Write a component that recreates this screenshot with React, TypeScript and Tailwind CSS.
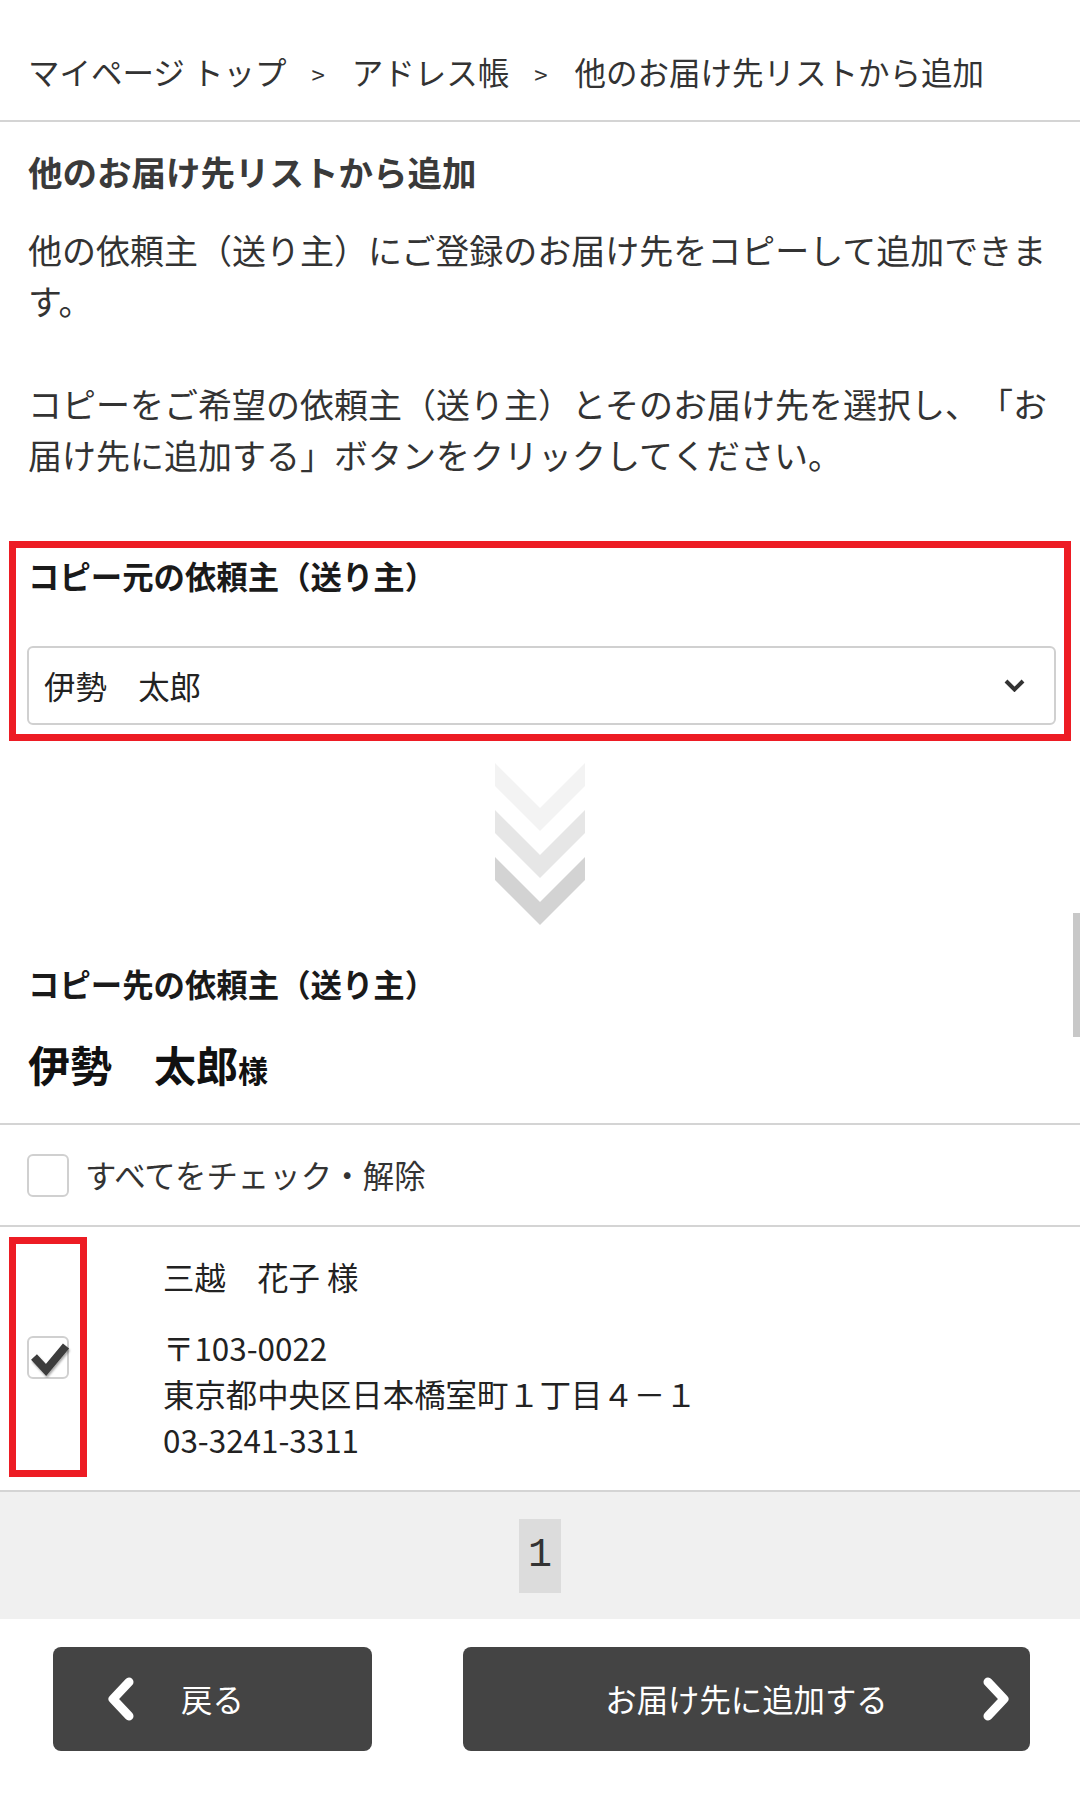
import React from 'react';

const Checkbox = ({ checked }: { checked?: boolean }) => (
  <div className="relative w-[42px] h-[43px] shrink-0 rounded-[6px] border-2 border-[#d0d0d0] bg-white">
    {checked && (
      <svg className="absolute left-[-2px] top-[-2px] overflow-visible" width="42" height="43" viewBox="0 0 42 43">
        <defs>
          <filter id="chk" x="-30%" y="-30%" width="160%" height="160%">
            <feDropShadow dx="1" dy="2" stdDeviation="1.2" floodColor="#000" floodOpacity="0.35" />
          </filter>
        </defs>
        <polyline points="7,21 19,34 39,10" fill="none" stroke="#3c3c3c" strokeWidth="8" filter="url(#chk)" />
      </svg>
    )}
  </div>
);

const Chevron = ({ dir }: { dir: 'left' | 'right' }) => (
  <svg width="28" height="44" viewBox="0 0 28 44">
    <polyline
      points={dir === 'left' ? '22,5 6,22 22,39' : '6,5 22,22 6,39'}
      fill="none"
      stroke="#fff"
      strokeWidth="9"
      strokeLinecap="round"
      strokeLinejoin="round"
    />
  </svg>
);

const DownArrows = () => (
  <svg width="90" height="162" viewBox="0 0 90 162">
    {['#f3f3f3', '#e6e6e6', '#d3d3d3'].map((c, i) => {
      const y = i * 47;
      return (
        <polygon
          key={i}
          points={`0,${y} 45,${y + 45} 90,${y} 90,${y + 23} 45,${y + 68} 0,${y + 23}`}
          fill={c}
        />
      );
    })}
  </svg>
);

const Sep = () => (
  <span className="inline-block text-[24px] leading-none ml-[25px] mr-[27px] align-middle -translate-y-[2px]">&gt;</span>
);

export default function App() {
  return (
    <div className="relative w-[1080px] bg-white text-[#333] font-['Noto_Sans_CJK_JP',sans-serif] [text-spacing-trim:space-all]">
      {/* breadcrumb */}
      <nav className="h-[122px] pt-[48px] px-[28px] text-[31.5px] leading-[46px] border-b-2 border-[#d4d4d4] whitespace-nowrap">
        <span>マイページ トップ</span>
        <Sep />
        <span>アドレス帳</span>
        <Sep />
        <span>他のお届け先リストから追加</span>
      </nav>

      <section className="px-[28px]">
        <h1 className="mt-[24px] text-[34.5px] leading-[50px] font-bold text-[#3a3a3a]">他のお届け先リストから追加</h1>
        <p className="mt-[28px] text-[34px] leading-[51px]">
          他の依頼主（送り主）にご登録のお届け先をコピーして追加できます。
        </p>
        <p className="mt-[52px] text-[34px] leading-[51px]">
          コピーをご希望の依頼主（送り主）とそのお届け先を選択し、「お届け先に追加する」ボタンをクリックしてください。
        </p>
      </section>

      {/* copy source */}
      <section className="mx-[9px] mt-[61px] border-[7px] border-[#ed1c24] pt-[5px] pb-[9px] pl-[11px] pr-[8px]">
        <h2 className="text-[31.4px] leading-[46px] font-bold text-[#1a1a1a] pl-[1px]">コピー元の依頼主（送り主）</h2>
        <div className="mt-[47px] h-[79px] flex items-center justify-between rounded-[6px] border-2 border-[#d0d0d0] pl-[15px] pr-[29px]">
          <span className="text-[31.4px] leading-[46px] text-[#222]">伊勢　太郎</span>
          <svg width="21" height="13" viewBox="0 0 21 13">
            <polyline points="2,2 10.5,10.5 19,2" fill="none" stroke="#333" strokeWidth="4" />
          </svg>
        </div>
      </section>

      <div className="mt-[22px] flex justify-center">
        <DownArrows />
      </div>

      <section className="px-[28px]">
        <h2 className="mt-[36px] text-[31.4px] leading-[46px] font-bold text-[#1a1a1a]">コピー先の依頼主（送り主）</h2>
        <p className="mt-[27px] h-[60px] text-[42px] leading-[60px] font-bold text-[#111]">
          伊勢　太郎<span className="text-[30px] leading-none">様</span>
        </p>
      </section>

      <div className="mt-[29px] border-t-2 border-[#d4d4d4] h-[102px] flex items-center gap-[16px] px-[27px]">
        <Checkbox />
        <span className="text-[31.4px] leading-[46px]">すべてをチェック・解除</span>
      </div>

      <div className="border-t-2 border-[#d4d4d4] flex">
        <div className="ml-[9px] mt-[10px] mb-[13px] w-[78px] h-[240px] border-[7px] border-[#ed1c24] flex items-center justify-center">
          <Checkbox checked />
        </div>
        <div className="ml-[76px] pt-[27px] pb-[26px] text-[31.4px] leading-[46px] text-[#222]">
          <p>三越　花子 様</p>
          <p className="mt-[25px]">〒103-0022</p>
          <p>東京都中央区日本橋室町１丁目４－１</p>
          <p>03-3241-3311</p>
        </div>
      </div>

      {/* pagination */}
      <div className="border-t-2 border-[#d4d4d4] bg-[#f0f0f0] h-[129px] flex items-center justify-center">
        <span className="w-[42px] h-[74px] bg-[#dcdcdc] flex items-center justify-center text-[40px] text-[#333] font-['Liberation_Mono',monospace]">
          1
        </span>
      </div>

      {/* buttons */}
      <div className="mt-[28px] pb-[59px] pl-[53px] flex gap-[91px]">
        <button className="relative w-[319px] h-[104px] rounded-[8px] bg-[#444] text-white text-[31.4px] leading-[46px] flex items-center justify-center">
          <span className="absolute left-[54px] top-0 h-full flex items-center">
            <Chevron dir="left" />
          </span>
          戻る
        </button>
        <button className="relative w-[567px] h-[104px] rounded-[8px] bg-[#444] text-white text-[31.4px] leading-[46px] flex items-center justify-center">
          お届け先に追加する
          <span className="absolute right-[20px] top-0 h-full flex items-center">
            <Chevron dir="right" />
          </span>
        </button>
      </div>

      {/* scrollbar thumb */}
      <div className="absolute right-0 top-[913px] w-[7px] h-[124px] bg-[#c8c8c8]" />
    </div>
  );
}
